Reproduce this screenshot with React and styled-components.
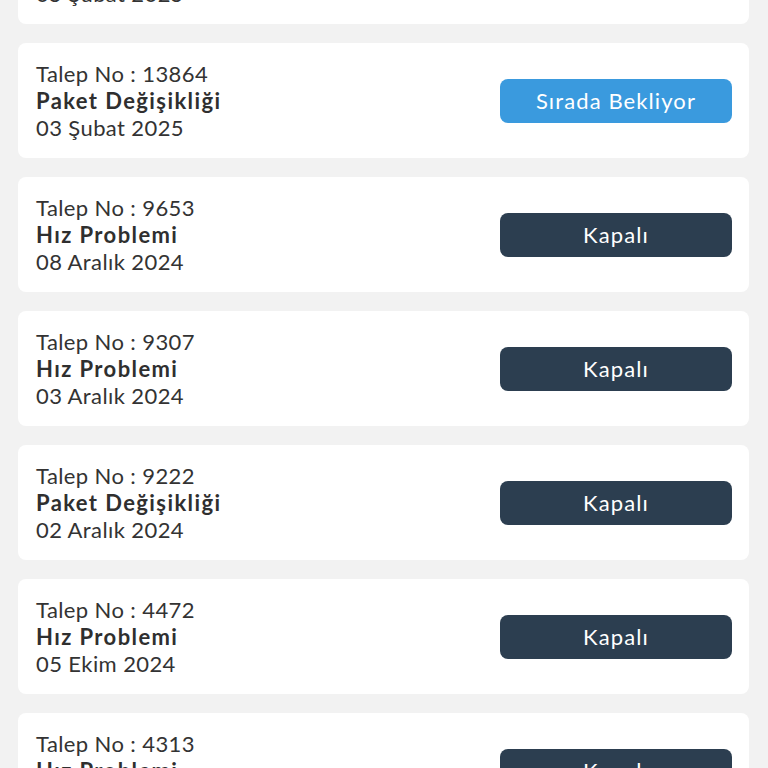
import styled, { createGlobalStyle } from "styled-components";

const GlobalStyle = createGlobalStyle`
  html, body {
    margin: 0;
    padding: 0;
    background: #f2f2f2;
    font-family: "Lato", "Noto Sans", sans-serif;
    overflow: hidden;
  }
`;

const tickets = [
  { no: 13901, title: "Paket Değişikliği", date: "05 Şubat 2025", status: "waiting" },
  { no: 13864, title: "Paket Değişikliği", date: "03 Şubat 2025", status: "waiting" },
  { no: 9653, title: "Hız Problemi", date: "08 Aralık 2024", status: "closed" },
  { no: 9307, title: "Hız Problemi", date: "03 Aralık 2024", status: "closed" },
  { no: 9222, title: "Paket Değişikliği", date: "02 Aralık 2024", status: "closed" },
  { no: 4472, title: "Hız Problemi", date: "05 Ekim 2024", status: "closed" },
  { no: 4313, title: "Hız Problemi", date: "01 Ekim 2024", status: "closed" },
];

const statusLabel = {
  waiting: "Sırada Bekliyor",
  closed: "Kapalı",
};

const App = () => {
  return (
    <>
      <GlobalStyle />
      <List>
        {tickets.map((t) => (
          <Card key={t.no}>
            <Info>
              <Line>Talep No : {t.no}</Line>
              <Title>{t.title}</Title>
              <Line>{t.date}</Line>
            </Info>
            <StatusButton $status={t.status}>{statusLabel[t.status]}</StatusButton>
          </Card>
        ))}
      </List>
    </>
  );
};

// list is scrolled down a bit, first card only shows its bottom edge
const List = styled.div`
  display: flex;
  flex-direction: column;
  gap: 19px;
  padding: 0 19px 0 18px;
  margin-top: -91px;
`;

const Card = styled.div`
  display: flex;
  align-items: center;
  justify-content: space-between;
  background: #fff;
  border-radius: 8px;
  padding: 17px 17px 17px 18px;
`;

const Info = styled.div`
  display: flex;
  flex-direction: column;
  color: #333;
  font-size: 22px;
  line-height: 27px;
`;

const Line = styled.span`
  font-weight: 400;
  letter-spacing: 0.4px;
`;

const Title = styled.span`
  font-weight: 700;
  letter-spacing: 1.4px;
  color: #2f2f2f;
`;

const StatusButton = styled.button`
  width: 232px;
  height: 44px;
  border: none;
  border-radius: 8px;
  font-family: inherit;
  font-size: 22px;
  letter-spacing: 1.1px;
  color: #fff;
  background: ${(p) => (p.$status === "waiting" ? "#3a9ade" : "#2c3e50")};
`;

export default App;
